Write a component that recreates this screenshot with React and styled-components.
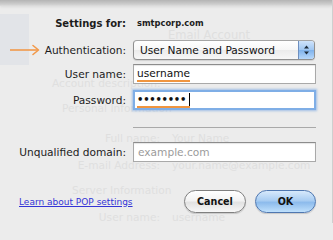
import React from "react";
import styled, { createGlobalStyle } from "styled-components";

const Global = createGlobalStyle`
  html, body { margin: 0; padding: 0; background: #ececec; }
  body { width: 333px; height: 223px; overflow: hidden; font-family: "DejaVu Sans", "Liberation Sans", sans-serif; }
`;

const Frame = styled.div`
  position: relative;
  width: 333px;
  height: 223px;
  overflow: hidden;
  background: #ececec;
  box-sizing: border-box;
  border-right: 1px solid #cfcfcf;
`;

/* window lying behind the sheet */
const GhostWindow = styled.div`
  display: flex;
  flex-direction: column;
  height: 100%;
`;

const TopBar = styled.div`
  height: 6px;
  flex: none;
  background: linear-gradient(#b4b4b4, #cdcdcd 70%, #dedede);
  box-shadow: 0 1px 3px rgba(0, 0, 0, 0.08);
`;

const GhostBody = styled.div`
  display: flex;
  flex: 1;
`;

const GhostSide = styled.div`
  width: 29px;
  flex: none;
`;

const SidePanel = styled.div`
  margin-top: 8px;
  height: 51px;
  background: #e2e4e8;
`;

const GhostMain = styled.div`
  display: flex;
  flex-direction: column;
  flex: 1;
`;

const GhostRow = styled.div`
  height: 14px;
  line-height: 14px;
  margin-top: ${(p) => p.$gap}px;
  padding-left: ${(p) => p.$indent}px;
  font-size: ${(p) => (p.$big ? 11.5 : 10.6)}px;
  color: #dfdfdf;
  white-space: nowrap;
`;

const GhostPair = styled.div`
  display: grid;
  grid-template-columns: 131px auto;
  column-gap: 12px;
  height: 14px;
  line-height: 14px;
  margin-top: ${(p) => p.$gap}px;
  font-size: 10.6px;
  color: #dfdfdf;
  white-space: nowrap;
`;

const GhostKey = styled.span`
  text-align: right;
`;

/* the sheet over it */
const Sheet = styled.div`
  position: absolute;
  inset: 0;
  display: flex;
  flex-direction: column;
  padding-top: 16px;
`;

const Row = styled.div`
  display: grid;
  grid-template-columns: 126px 183px;
  column-gap: 7px;
  align-items: center;
  height: ${(p) => p.$h}px;
  margin-top: ${(p) => p.$mt || 0}px;
`;

const Label = styled.div`
  display: flex;
  align-items: center;
  justify-content: flex-end;
  font-size: 10.6px;
  color: #1c1c1c;
  white-space: nowrap;
`;

const BoldLabel = styled(Label)`
  font-size: 10px;
  font-weight: bold;
`;

const Host = styled.div`
  padding-left: 4px;
  font-size: 8.3px;
  font-weight: bold;
  color: #1c1c1c;
`;

const ArrowIcon = styled.svg`
  margin-right: 5px;
  flex: none;
`;

const Popup = styled.div`
  display: flex;
  align-items: center;
  height: 20px;
  box-sizing: border-box;
  border: 1px solid #8f8f8f;
  border-top-color: #a5a5a5;
  border-radius: 4px;
  background: linear-gradient(#ffffff, #f6f6f6 50%, #ebebeb 51%, #f7f7f7);
  box-shadow: 0 1px 1px rgba(0, 0, 0, 0.12);
  font-size: 10.6px;
  color: #111;
  padding-left: 6px;
  overflow: hidden;
  width: 182px;
`;

const PopupText = styled.span`
  flex: 1;
  white-space: nowrap;
`;

const Stepper = styled.div`
  width: 15px;
  height: 100%;
  display: flex;
  align-items: center;
  justify-content: center;
  background: linear-gradient(#cfe3fb, #9fc6f1 50%, #7fb2ec 51%, #b7d8fb);
  border-left: 1px solid #6e8fbf;
`;

const Field = styled.div`
  display: flex;
  align-items: center;
  height: 20px;
  box-sizing: border-box;
  background: #fff;
  border: 1px solid #a9a9a9;
  border-top-color: #8c8c8c;
  box-shadow: inset 0 1px 1px rgba(0, 0, 0, 0.1);
  padding-left: ${(p) => (p.$focus ? 2 : 3)}px;
  font-size: 10.6px;
  color: #111;
  ${(p) =>
    p.$focus &&
    `
    border: 2px solid #7faee6;
    box-shadow: 0 0 2px 1px rgba(110, 160, 225, 0.6);
  `}
`;

const Placeholder = styled.span`
  color: #9b9b9b;
  padding-left: 1px;
`;

const Marked = styled.span`
  display: inline-flex;
  align-items: center;
  height: 15px;
  margin-top: 0px;
  border-bottom: 2px solid #f0953f;
  width: ${(p) => p.$w}px;
  box-sizing: border-box;
`;

const Dots = styled.span`
  font-size: 10px;
  letter-spacing: -0.25px;
  font-weight: bold;
`;

const Caret = styled.span`
  display: inline-block;
  width: 1px;
  height: 13px;
  margin-left: 3px;
  background: #000;
`;

const Separator = styled.div`
  margin-top: 17px;
  margin-left: 133px;
  width: 183px;
  height: 1px;
  background: #a9a9a9;
`;

const Footer = styled.div`
  display: flex;
  align-items: center;
  margin-top: 28px;
  height: 23px;
  padding-left: 19px;
  padding-right: 16px;
`;

const HelpLink = styled.a`
  font-size: 9px;
  color: #3434d6;
  text-decoration: underline;
  margin-right: auto;
  white-space: nowrap;
  cursor: pointer;
`;

const Button = styled.button`
  height: 23px;
  width: ${(p) => p.$w}px;
  margin-left: ${(p) => p.$ml || 0}px;
  border-radius: 12px;
  font-family: "DejaVu Sans", sans-serif;
  font-size: 9.6px;
  font-weight: bold;
  color: #111;
  padding: 0;
  border: 1px solid ${(p) => (p.$primary ? "#4f77b0" : "#808080")};
  background: ${(p) =>
    p.$primary
      ? "linear-gradient(#d7e9fb, #a9cdf2 45%, #8dbbec 55%, #bfe0fc)"
      : "linear-gradient(#ffffff, #f3f3f3 45%, #e2e2e2 55%, #f7f7f7)"};
  box-shadow: 0 1px 1px rgba(0, 0, 0, 0.15);
`;

function Arrow() {
  return (
    <ArrowIcon width="31" height="12" viewBox="0 0 31 12">
      <path d="M1 6 H29" stroke="#f2994a" strokeWidth="1.6" fill="none" />
      <path d="M24 1.5 L29.5 6 L24 10.5" stroke="#f2994a" strokeWidth="1.6" fill="none" strokeLinecap="round" strokeLinejoin="round" />
    </ArrowIcon>
  );
}

function StepArrows() {
  return (
    <svg width="7" height="12" viewBox="0 0 7 12">
      <path d="M3.5 1.5 L6 4.5 H1 Z" fill="#1d2a3a" />
      <path d="M3.5 10.5 L6 7.5 H1 Z" fill="#1d2a3a" />
    </svg>
  );
}

export default function App() {
  return (
    <>
      <Global />
      <Frame>
        <GhostWindow>
          <TopBar />
          <GhostBody>
            <GhostSide>
              <SidePanel />
            </GhostSide>
            <GhostMain>
              <GhostRow $gap={22} $indent={139} $big>Email Account</GhostRow>
              <GhostRow $gap={34} $indent={23}>Account description:</GhostRow>
              <GhostRow $gap={11} $indent={33}>Personal Information</GhostRow>
              <GhostPair $gap={16}>
                <GhostKey>Full name:</GhostKey>
                <span>Your Name</span>
              </GhostPair>
              <GhostPair $gap={13}>
                <GhostKey>E-mail Address:</GhostKey>
                <span>your.name@example.com</span>
              </GhostPair>
              <GhostRow $gap={11} $indent={43}>Server Information</GhostRow>
              <GhostPair $gap={13}>
                <GhostKey>User name:</GhostKey>
                <span>username</span>
              </GhostPair>
            </GhostMain>
          </GhostBody>
        </GhostWindow>

        <Sheet>
          <Row $h={14}>
            <BoldLabel>Settings for:</BoldLabel>
            <Host>smtpcorp.com</Host>
          </Row>
          <Row $h={20} $mt={10}>
            <Label>
              <Arrow />
              Authentication:
            </Label>
            <Popup>
              <PopupText>User Name and Password</PopupText>
              <Stepper>
                <StepArrows />
              </Stepper>
            </Popup>
          </Row>
          <Row $h={20} $mt={4}>
            <Label>User name:</Label>
            <Field>
              <Marked $w={53}>username</Marked>
            </Field>
          </Row>
          <Row $h={20} $mt={6}>
            <Label>Password:</Label>
            <Field $focus>
              <Marked $w={53}>
                <Dots>••••••••</Dots>
                <Caret />
              </Marked>
            </Field>
          </Row>
          <Separator />
          <Row $h={20} $mt={14}>
            <Label>Unqualified domain:</Label>
            <Field>
              <Placeholder>example.com</Placeholder>
            </Field>
          </Row>
          <Footer>
            <HelpLink>Learn about POP settings</HelpLink>
            <Button $w={62}>Cancel</Button>
            <Button $w={61} $ml={9} $primary>OK</Button>
          </Footer>
        </Sheet>
      </Frame>
    </>
  );
}
